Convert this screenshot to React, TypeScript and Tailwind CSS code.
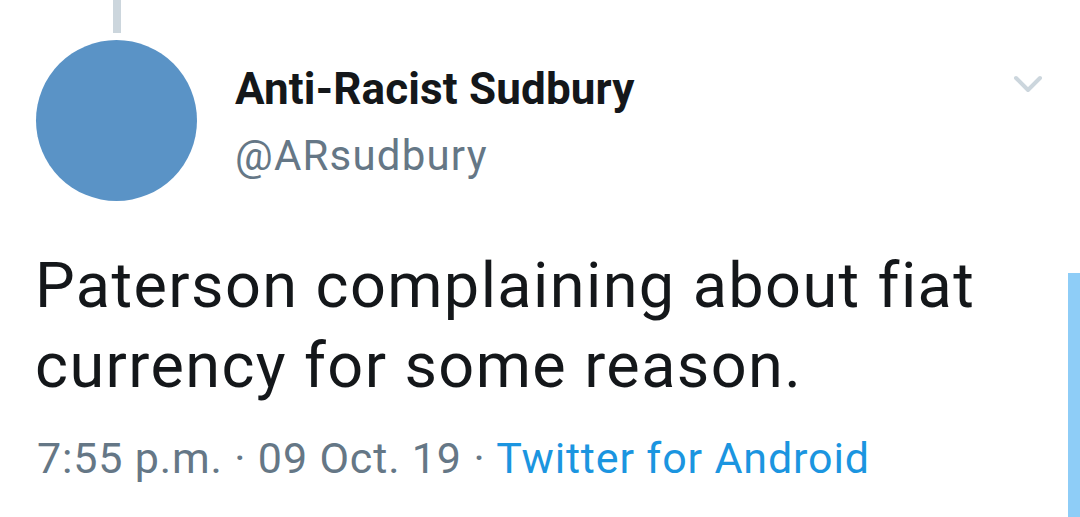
export default function App() {
  return (
    <div
      className="relative w-[1080px] h-[517px] overflow-hidden bg-white"
      style={{ fontFamily: "Roboto, 'Noto Sans', sans-serif" }}
    >
      {/* header */}
      <div className="flex items-start">
        <div className="ml-[36px] flex w-[161px] flex-col items-center">
          <div className="h-[33px] w-[8px] bg-[#ccd6dd]" />
          <div className="mt-[7px] h-[161px] w-[161px] rounded-full bg-[#5a93c6]" />
        </div>
        <div className="ml-[38px] flex-1 pt-[63px]">
          <div className="text-[44px] font-bold leading-[52px] tracking-[0.15px] text-[#14171a]">
            Anti-Racist Sudbury
          </div>
          <div className="mt-[16px] text-[42px] leading-[50px] tracking-[1.2px] text-[#657786]">
            @ARsudbury
          </div>
        </div>
        <svg
          className="mr-[37px] mt-[73px]"
          width="30"
          height="22"
          viewBox="0 0 30 22"
          fill="none"
          stroke="#ccd6dd"
          strokeWidth="4"
          strokeLinecap="round"
          strokeLinejoin="round"
        >
          <path d="M3 5 L15 17 L27 5" />
        </svg>
      </div>

      {/* body */}
      <p className="mt-[45px] px-[35px] text-[63px] leading-[80px] tracking-[1.4px] text-[#14171a]">
        Paterson complaining about fiat
        <br />
        currency for some reason.
      </p>

      {/* meta */}
      <div className="mt-[27px] px-[37px] text-[43px] leading-[50px] tracking-[0.85px] text-[#657786]">
        7:55 p.m. · 09 Oct. 19 ·{" "}
        <span className="text-[#1b95e0]">Twitter for Android</span>
      </div>

      {/* scroll indicator */}
      <div className="absolute bottom-0 right-0 top-[273px] w-[12px] bg-[#8ecdf7]" />
    </div>
  );
}
